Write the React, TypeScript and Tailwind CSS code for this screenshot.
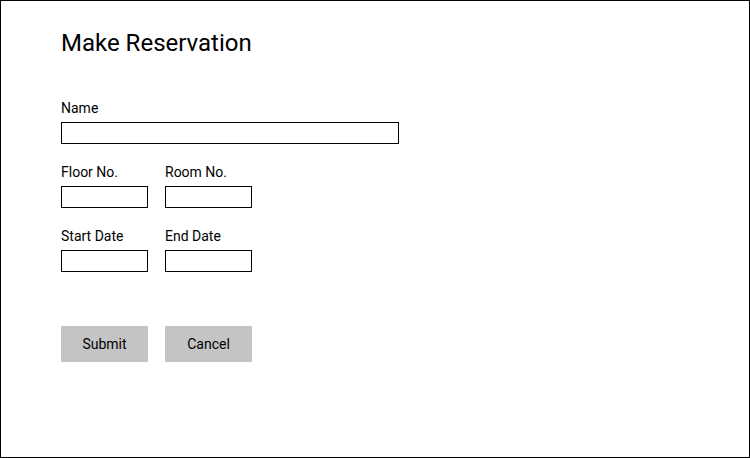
import React from "react";

export default function App() {
  return (
    <div
      className="w-[750px] h-[458px] border border-black bg-white pl-[60px] pt-[28px] text-black"
      style={{ fontFamily: "Roboto, 'Noto Sans', sans-serif" }}
    >
      <h1 className="text-[24px] leading-[28px] font-normal">Make Reservation</h1>
      <div className="mt-[43px] flex flex-col gap-[20px]">
        <div className="flex flex-col">
          <label className="text-[14px] leading-[16px]">Name</label>
          <input className="mt-[6px] w-[338px] h-[22px] border border-black outline-none" />
        </div>
        <div className="flex gap-[17px]">
          <div className="flex flex-col">
            <label className="text-[14px] leading-[16px]">Floor No.</label>
            <input className="mt-[6px] w-[87px] h-[22px] border border-black outline-none" />
          </div>
          <div className="flex flex-col">
            <label className="text-[14px] leading-[16px]">Room No.</label>
            <input className="mt-[6px] w-[87px] h-[22px] border border-black outline-none" />
          </div>
        </div>
        <div className="flex gap-[17px]">
          <div className="flex flex-col">
            <label className="text-[14px] leading-[16px]">Start Date</label>
            <input className="mt-[6px] w-[87px] h-[22px] border border-black outline-none" />
          </div>
          <div className="flex flex-col">
            <label className="text-[14px] leading-[16px]">End Date</label>
            <input className="mt-[6px] w-[87px] h-[22px] border border-black outline-none" />
          </div>
        </div>
      </div>
      <div className="mt-[54px] flex gap-[17px]">
        <button className="w-[87px] h-[36px] bg-[#c4c4c4] text-[14px] leading-[16px]">Submit</button>
        <button className="w-[87px] h-[36px] bg-[#c4c4c4] text-[14px] leading-[16px]">Cancel</button>
      </div>
    </div>
  );
}
